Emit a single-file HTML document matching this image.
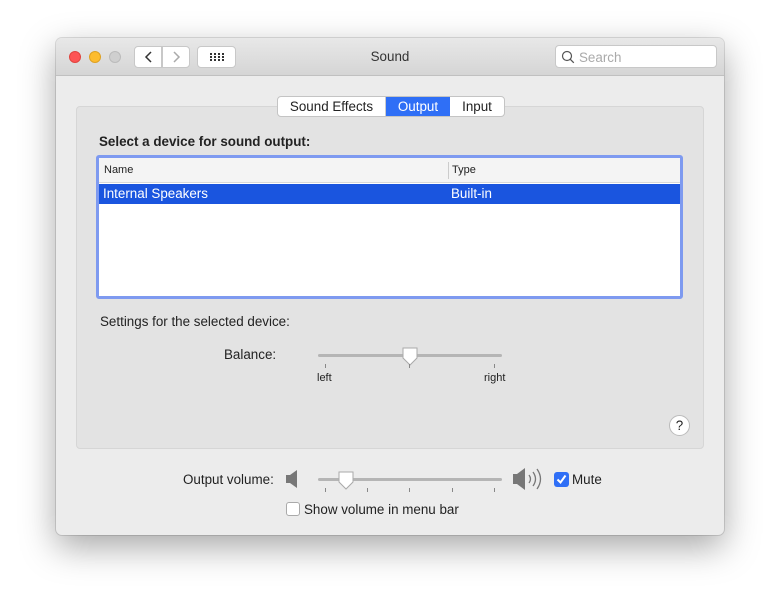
<!DOCTYPE html>
<html><head><meta charset="utf-8"><style>
*{box-sizing:border-box;margin:0;padding:0}
body{width:780px;height:610px;background:#fff;font-family:"Liberation Sans",sans-serif;font-size:13.4px;color:#222;position:relative;overflow:hidden}
.a{position:absolute}
.win{left:56px;top:38px;width:668px;height:497px;background:#ececec;border-radius:6px;box-shadow:0 12px 35px rgba(0,0,0,.35),0 0 0 1px rgba(0,0,0,.12);overflow:hidden}
.tb{left:0;top:0;width:668px;height:38px;background:linear-gradient(#e8e8e8,#d5d5d5);border-bottom:1px solid #c0c0c0}
.dot{width:12px;height:12px;border-radius:6px;top:13px}
.btn{background:#fff;border:1px solid #c8c8c8;border-radius:4px;height:22px;top:8px}
.panel{left:20px;top:68px;width:628px;height:343px;background:#e3e3e3;border:1px solid #d6d6d6;border-radius:4px}
.track{height:3px;background:#b5b5b5;border-radius:2px}
.tick{width:1px;height:4px;background:#888}
</style></head><body>
<div class="a win">
 <div class="a tb"></div>
 <div class="a dot" style="left:13px;background:#fd5454;border:1px solid #e0443e"></div>
 <div class="a dot" style="left:33px;background:#fdbc2e;border:1px solid #dea123"></div>
 <div class="a dot" style="left:53px;background:#cfcfcf;border:1px solid #bbb"></div>
 <div class="a btn" style="left:78px;width:28px;border-radius:4px 0 0 4px"><svg width="28" height="20"><path d="M16 5l-5 5 5 5" fill="none" stroke="#333" stroke-width="1.5"/></svg></div>
 <div class="a btn" style="left:106px;width:28px;border-radius:0 4px 4px 0"><svg width="28" height="20"><path d="M11 5l5 5-5 5" fill="none" stroke="#aaa" stroke-width="1.5"/></svg></div>
 <div class="a btn" style="left:141px;width:39px"><svg width="39" height="20"><g fill="#333"><rect x="12" y="6" width="2" height="2"/><rect x="16" y="6" width="2" height="2"/><rect x="20" y="6" width="2" height="2"/><rect x="24" y="6" width="2" height="2"/><rect x="12" y="9" width="2" height="2"/><rect x="16" y="9" width="2" height="2"/><rect x="20" y="9" width="2" height="2"/><rect x="24" y="9" width="2" height="2"/><rect x="12" y="12" width="2" height="2"/><rect x="16" y="12" width="2" height="2"/><rect x="20" y="12" width="2" height="2"/><rect x="24" y="12" width="2" height="2"/></g></svg></div>
 <div class="a" style="left:0;width:668px;top:11px;text-align:center;color:#333">Sound</div>
 <div class="a" style="left:499px;top:7px;width:162px;height:23px;background:#fff;border:1px solid #c8c8c8;border-radius:4px"><svg class="a" style="left:4px;top:3px" width="16" height="16"><circle cx="7" cy="7" r="4.5" fill="none" stroke="#555" stroke-width="1.2"/><path d="M10.3 10.3l3.5 3.5" stroke="#555" stroke-width="1.3"/></svg><span class="a" style="left:23px;top:4px;color:#aaa">Search</span></div>
 <div class="panel a"></div>
 <div class="a" style="left:221px;top:58px;width:228px;height:21px;border:1px solid #c4c4c4;border-radius:4px;background:#fff;overflow:hidden;line-height:19px">
  <div class="a" style="left:0;width:108px;text-align:center;border-right:1px solid #ccc">Sound Effects</div>
  <div class="a" style="left:108px;width:64px;text-align:center;background:#2f6ff6;color:#fff">Output</div>
  <div class="a" style="left:172px;width:54px;text-align:center">Input</div>
 </div>
 <div class="a" style="left:43px;top:96px;font-weight:bold">Select a device for sound output:</div>
 <div class="a" style="left:40px;top:117px;width:587px;height:144px;border:3px solid #7e9af0;border-radius:3px;background:#fff">
  <div class="a" style="left:0;top:0;width:581px;height:25px;background:#f4f4f4;border-bottom:1px solid #d8d8d8;font-size:11px;line-height:25px"><span class="a" style="left:5px">Name</span><span class="a" style="left:349px;top:4px;height:17px;border-left:1px solid #ccc"></span><span class="a" style="left:353px">Type</span></div>
  <div class="a" style="left:0;top:26px;width:581px;height:20px;background:#1a55df;color:#fff;line-height:20px"><span class="a" style="left:4px">Internal Speakers</span><span class="a" style="left:352px">Built-in</span></div>
 </div>
 <div class="a" style="left:44px;top:276px">Settings for the selected device:</div>
 <div class="a" style="left:168px;top:309px">Balance:</div>
 <div class="a track" style="left:262px;top:316px;width:184px"></div>
 <svg class="a" style="left:345px;top:309px" width="18" height="20"><path d="M2 1h14v10l-7 7-7-7z" fill="#fff" stroke="#aaa"/></svg>
 <div class="a tick" style="left:269px;top:326px"></div><div class="a tick" style="left:353px;top:326px"></div><div class="a tick" style="left:438px;top:326px"></div>
 <div class="a" style="left:261px;top:334px;font-size:11px">left</div>
 <div class="a" style="left:428px;top:334px;font-size:11px">right</div>
 <div class="a" style="left:613px;top:377px;width:21px;height:21px;border-radius:50%;background:#fff;border:1px solid #bbb;text-align:center;line-height:19px">?</div>
 <div class="a" style="left:127px;top:434px">Output volume:</div>
 <svg class="a" style="left:229px;top:432px" width="14" height="18"><path d="M1 5h4l7-5v18l-7-5H1z" fill="#777"/></svg>
 <div class="a track" style="left:262px;top:440px;width:184px"></div>
 <svg class="a" style="left:281px;top:433px" width="18" height="20"><path d="M2 1h14v10l-7 7-7-7z" fill="#fff" stroke="#aaa"/></svg>
 <div class="a tick" style="left:269px;top:450px"></div><div class="a tick" style="left:311px;top:450px"></div><div class="a tick" style="left:353px;top:450px"></div><div class="a tick" style="left:396px;top:450px"></div><div class="a tick" style="left:438px;top:450px"></div>
 <svg class="a" style="left:456px;top:429px" width="34" height="26"><path d="M1 7h4l8-6v22l-8-6H1z" fill="#777"/><path d="M17 8q3 4 0 8M21 5q5 7 0 14M25 2q7 10 0 20" fill="none" stroke="#777" stroke-width="1.3"/></svg>
 <div class="a" style="left:498px;top:434px;width:15px;height:15px;background:#2f6ff6;border-radius:3px"><svg width="15" height="15"><path d="M3.5 7.5l3 3 5-7" fill="none" stroke="#fff" stroke-width="2"/></svg></div>
 <div class="a" style="left:516px;top:434px">Mute</div>
 <div class="a" style="left:230px;top:464px;width:14px;height:14px;background:#fff;border:1px solid #aaa;border-radius:3px"></div>
 <div class="a" style="left:248px;top:464px">Show volume in menu bar</div>
</div>
</body></html>
